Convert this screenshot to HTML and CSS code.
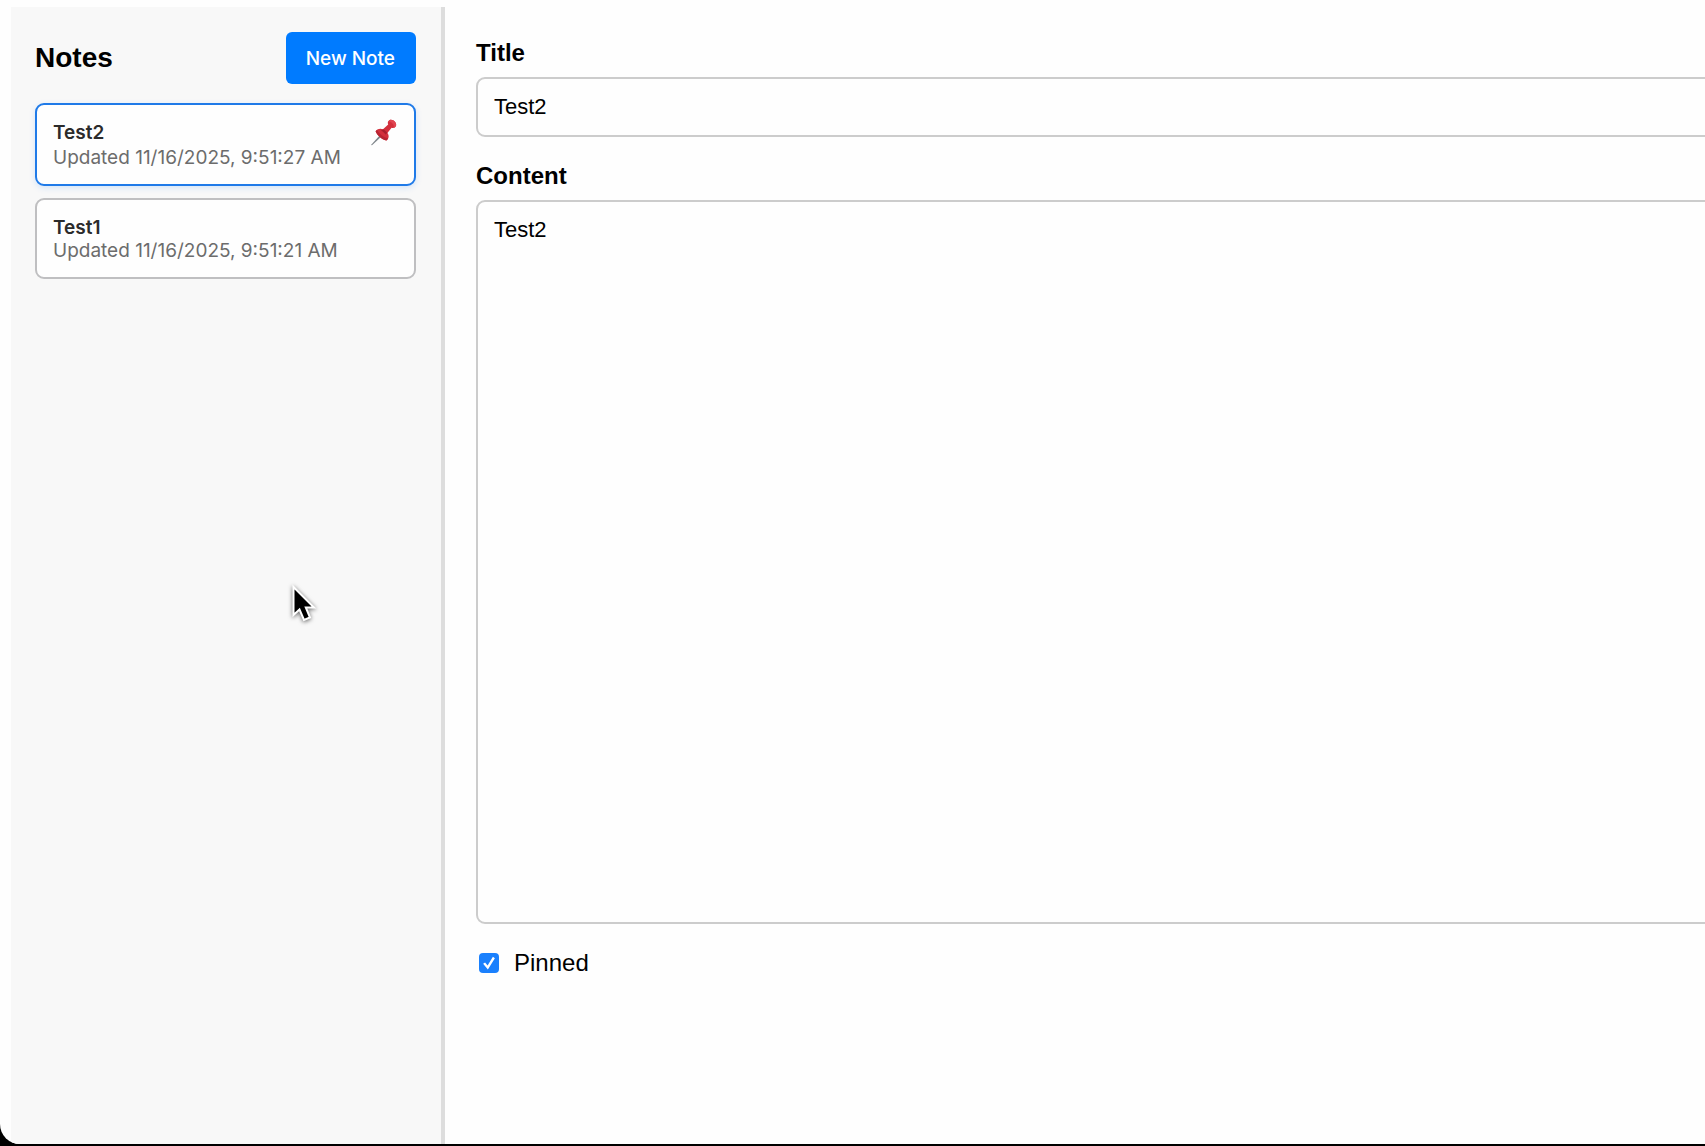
FILE: index.html
```html
<!DOCTYPE html>
<html lang="en">
<head>
  <meta charset="UTF-8">
  <meta name="viewport" content="width=device-width, initial-scale=1.0">
  <title>Notes</title>
  <link rel="stylesheet" href="styles.css">
</head>
<body>
  <div class="window">
    <!-- Note list -->
    <aside class="sidebar">
      <header class="sidebar-header">
        <h1>Notes</h1>
        <button type="button" class="new-btn">New Note</button>
      </header>

      <div class="note-list">
        <button type="button" class="note active">
          <span class="note-row">
            <span class="note-title">Test2</span>
            <svg class="pin" viewBox="1 2 26 26" aria-hidden="true">
              <path d="M0 26 L9.5 15.5 L11 17 L1 26.2 Z" fill="#7d8489"/>
              <path d="M4.6 12.2 C6.5 9.4 9.6 9.2 12 10.2 L17.2 5.4 C16.2 3.2 17.4 0.8 20 0.8 C23 1 25.2 3.4 25.2 6 C25 8.4 22.6 9.6 20.6 8.8 L16.4 14 C18.4 16.6 18 19.8 15.4 21.4 C10.6 20.2 6.4 16.8 4.6 12.2 Z" fill="#d32f3c"/>
              <path d="M12 10.2 C13.8 11 15.6 12.6 16.4 14 L14.4 15.6 C13.4 13.8 11.8 12.4 10 11.8 Z" fill="#a81f2d"/>
              <path d="M20 0.8 C23 1 25.2 3.4 25.2 6 C25 7.6 24 8.4 22.8 8.8 C23.4 5.6 21 2.8 17.6 2.4 C18.2 1.4 19 0.8 20 0.8 Z" fill="#e04550"/>
              <path d="M4.6 12.2 C6.4 16.8 10.6 20.2 15.4 21.4 C16.2 20.9 16.8 20.2 17.1 19.4 C12.5 18.4 8.2 15 6 10.8 Z" fill="#b82432"/>
            </svg>
          </span>
          <span class="note-date">Updated 11/16/2025, 9:51:27 AM</span>
        </button>
        <button type="button" class="note">
          <span class="note-row">
            <span class="note-title">Test1</span>
          </span>
          <span class="note-date">Updated 11/16/2025, 9:51:21 AM</span>
        </button>
      </div>
    </aside>

    <!-- Editor -->
    <main class="editor">
      <div class="field">
        <label for="title">Title</label>
        <input type="text" id="title" value="Test2">
      </div>
      <div class="field field-content">
        <label for="content">Content</label>
        <textarea id="content">Test2</textarea>
      </div>
      <div class="pinned">
        <input type="checkbox" id="pinned" checked>
        <label for="pinned">Pinned</label>
      </div>
    </main>
  </div>

  <!-- Mouse pointer -->
  <svg class="pointer" viewBox="0 0 24 38" aria-hidden="true">
    <path d="M1.5 2 V30 L7.5 24.5 L12 35 L18 32.5 L13.8 22.5 H22 Z" fill="#000" stroke="#fff" stroke-width="2"/>
  </svg>
</body>
</html>
```
FILE: styles.css
```css
* {
  box-sizing: border-box;
}

body {
  margin: 0;
  overflow: hidden;
  background-color: #000;
  color: #000;
  font-family: 'Liberation Sans', Arial, sans-serif;
}

.window {
  display: flex;
  height: calc(100vh - 2px);
  padding: 7px 0 0 11px;
  overflow: hidden;
  background-color: #fefefe;
  border-bottom-left-radius: 20px;
}

/* Sidebar */
.sidebar {
  flex: 0 0 434px;
  padding: 25px 25px 24px 24px;
  background-color: #f8f8f8;
  border-right: 4px solid #ddd;
}

.sidebar-header {
  display: flex;
  justify-content: space-between;
  align-items: center;
  margin-bottom: 19px;
}

h1 {
  margin: 0;
  font-size: 28px;
}

.new-btn {
  padding: 16px 21px 14px 20px;
  border: none;
  border-radius: 6px;
  background-color: #007bff;
  color: #fff;
  font-family: Inter, sans-serif;
  font-size: 19px;
  font-weight: 500;
  line-height: 22px;
  cursor: pointer;
}

.note-list {
  display: flex;
  flex-direction: column;
  gap: 12px;
}

.note {
  display: block;
  width: 100%;
  padding: 16px;
  border: 2px solid #bfbfc1;
  border-radius: 9px;
  background-color: #fefefe;
  font-family: Inter, sans-serif;
  font-size: 19px;
  line-height: 21px;
  text-align: left;
  cursor: pointer;
}

.note.active {
  border-color: #1f7ae8;
  box-shadow: 0 2px 6px rgba(0, 123, 255, 0.15);
}

.note-row {
  display: flex;
  justify-content: space-between;
  align-items: flex-start;
}

.note-title {
  color: #2b2b2b;
  font-weight: 600;
  line-height: 24px;
}

.note-date {
  display: block;
  color: #6c6c6c;
}

.pin {
  width: 26px;
  height: 26px;
  overflow: visible;
}

/* Editor */
.editor {
  flex: 1;
  display: flex;
  flex-direction: column;
  gap: 25px;
  margin-right: -32px;
  padding: 32px 0 167px 31px;
}

.field {
  display: flex;
  flex-direction: column;
  gap: 10px;
}

.field-content {
  flex: 1;
}

.editor label {
  font-size: 24px;
  line-height: 28px;
}

.field label {
  font-weight: bold;
}

.field input,
.field textarea {
  width: 100%;
  padding: 16px;
  border: 2px solid #ccc;
  border-radius: 9px;
  background-color: #fefefe;
  color: #000;
  font-family: inherit;
  font-size: 22px;
  line-height: 24px;
}

.field input {
  height: 60px;
}

.field textarea {
  flex: 1;
  resize: none;
}

.pinned {
  display: flex;
  align-items: center;
  gap: 15px;
}

.pinned input {
  appearance: none;
  display: grid;
  place-items: center;
  width: 20px;
  height: 20px;
  margin: 0 0 0 3px;
  border-radius: 4px;
  background-color: #1a80fd;
}

.pinned input:checked::before {
  content: "";
  width: 14px;
  height: 14px;
  background-color: #fff;
  clip-path: polygon(8% 56%, 22% 46%, 40% 68%, 78% 6%, 92% 16%, 42% 96%);
}

.pointer {
  position: absolute;
  top: 585px;
  left: 292px;
  width: 24px;
  height: 38px;
  overflow: visible;
  filter: drop-shadow(0 1px 2px rgba(0, 0, 0, 0.6));
}
```
